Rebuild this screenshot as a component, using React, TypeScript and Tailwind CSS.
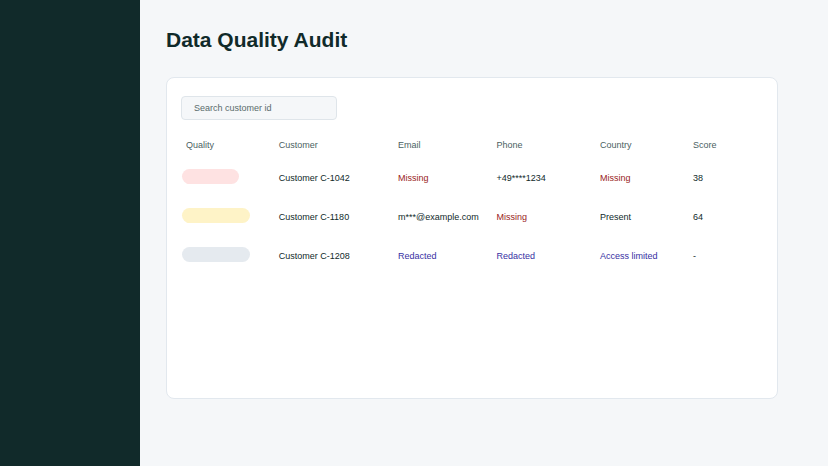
import React from "react";

type Customer = {
  id: string;
  badge: string;
  email: string;
  phone: string;
  country: string;
  score: string;
};

const customers: Customer[] = [
  {
    id: "C-1042",
    badge: "w-[57px] bg-[#fee2e2]",
    email: "Missing",
    phone: "+49****1234",
    country: "Missing",
    score: "38",
  },
  {
    id: "C-1180",
    badge: "w-[68px] bg-[#fef3c7]",
    email: "m***@example.com",
    phone: "Missing",
    country: "Present",
    score: "64",
  },
  {
    id: "C-1208",
    badge: "w-[68px] bg-[#e5eaef]",
    email: "Redacted",
    phone: "Redacted",
    country: "Access limited",
    score: "-",
  },
];

function valueColor(value: string) {
  if (value === "Missing") return "text-[#991b1b]";
  if (value === "Redacted" || value === "Access limited")
    return "text-[#3730a3]";
  return "text-[#102a2a]";
}

function CustomerTable() {
  return (
    <table className="mt-3 w-full table-fixed text-left text-[9px] leading-3 whitespace-nowrap text-[#102a2a]">
      <thead className="text-[#4b5f5f]">
        <tr className="h-[26px]">
          <th scope="col" className="w-[16.8%] pl-[5px] font-normal">
            Quality
          </th>
          <th scope="col" className="w-[20.5%] font-normal">
            Customer
          </th>
          <th scope="col" className="w-[16.9%] font-normal">
            Email
          </th>
          <th scope="col" className="w-[17.8%] font-normal">
            Phone
          </th>
          <th scope="col" className="w-[16%] font-normal">
            Country
          </th>
          <th scope="col" className="font-normal">
            Score
          </th>
        </tr>
      </thead>
      <tbody>
        {customers.map((customer) => (
          <tr key={customer.id} className="h-[39px]">
            <td className="pb-[2px] pl-px">
              <span
                className={`block h-[15px] rounded-full ${customer.badge}`}
              />
            </td>
            <th scope="row" className="font-medium">
              Customer {customer.id}
            </th>
            <td className={valueColor(customer.email)}>{customer.email}</td>
            <td className={valueColor(customer.phone)}>{customer.phone}</td>
            <td className={valueColor(customer.country)}>
              {customer.country}
            </td>
            <td className="font-medium">{customer.score}</td>
          </tr>
        ))}
      </tbody>
    </table>
  );
}

function App() {
  return (
    <div className="flex min-h-screen bg-[#f5f7f9] font-['Liberation_Sans',Arial,sans-serif]">
      <aside className="w-[140px] shrink-0 bg-[#112a2a]" />
      <main className="flex min-w-0 flex-1 flex-col pt-[26px] pr-[50px] pb-[67px] pl-[26px]">
        <h1 className="text-[21px] leading-7 font-bold text-[#102a2a]">
          Data Quality Audit
        </h1>
        <section className="mt-[23px] flex-1 rounded-lg border border-[#e2e8ee] bg-white px-[14px] py-[18px]">
          <input
            type="search"
            aria-label="Search customer id"
            placeholder="Search customer id"
            className="block h-6 w-[156px] rounded border border-[#dfe5ea] bg-[#f5f7f9] px-3 text-[9px] text-[#102a2a] placeholder:text-[#5a6b6b]"
          />
          <CustomerTable />
        </section>
      </main>
    </div>
  );
}

export default App;
